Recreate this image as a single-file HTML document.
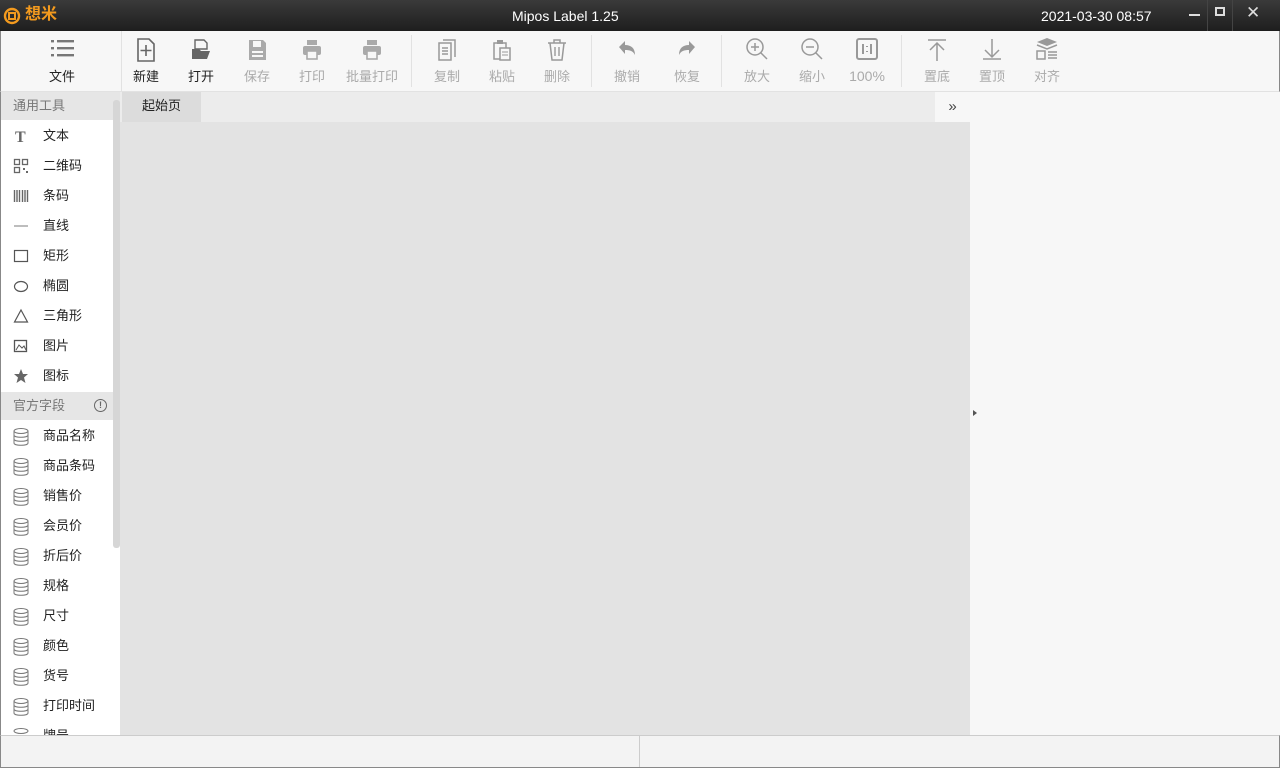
<!DOCTYPE html><html><head><meta charset="utf-8"><style>
*{margin:0;padding:0;box-sizing:border-box}
body{width:1280px;height:768px;overflow:hidden;background:#f7f7f7;font-family:"Liberation Sans","Noto Sans CJK SC",sans-serif;position:relative}
.a{position:absolute}
#title{left:0;top:0;width:1280px;height:31px;background:linear-gradient(#3a3a3a,#1e1e1e);color:#fff}
#tb{left:0;top:31px;width:1280px;height:61px;background:#f7f7f7;border-bottom:1px solid #e2e2e2;border-left:1px solid #888;border-right:1px solid #888}
.it{position:absolute;top:0;width:60px;margin-left:-30px;text-align:center}
.it svg{position:absolute;left:18px;top:6px}
.it span{position:absolute;top:35px;left:0;width:60px;font-size:13px;color:#aaa;white-space:nowrap}
.it.d span{color:#222}
.sep{position:absolute;top:4px;width:1px;height:52px;background:#e2e2e2}
#side{left:0;top:92px;width:120px;height:643px;background:#fff;border-left:1px solid #888}
.hd{position:absolute;left:0;width:119px;height:28px;background:#e6e6e6;font-size:13px;color:#777;padding:6px 12px;line-height:16px}
.row{position:absolute;left:0;width:112px;height:30px;font-size:13px;color:#222;line-height:30px}
.row span{position:absolute;left:42px}
.row svg{position:absolute;left:12px;top:7px}
</style></head><body>
<div id="title" class="a">
 <svg class="a" style="left:3px;top:7px" width="18" height="18" viewBox="0 0 18 18"><circle cx="9" cy="9" r="7" fill="none" stroke="#f39a1e" stroke-width="2.4"/><rect x="6" y="6" width="6" height="6" fill="none" stroke="#f39a1e" stroke-width="2"/></svg>
 <div class="a" style="left:25px;top:5px;font-size:16px;font-weight:bold;color:#f39a1e;line-height:20px">想米</div>
 <div class="a" style="left:512px;top:8px;font-size:14px;line-height:17px">Mipos Label 1.25</div>
 <div class="a" style="left:1041px;top:8px;font-size:14px;line-height:17px">2021-03-30 08:57</div>
 <div class="a" style="left:1189px;top:14px;width:11px;height:2px;background:#ddd"></div>
 <div class="a" style="left:1215px;top:7px;width:10px;height:9px;border:2px solid #ddd"></div>
 <div class="a" style="left:1246px;top:3px;font-size:17px;color:#ddd">✕</div>
 <div class="a" style="left:1207px;top:0;width:1px;height:31px;background:#444"></div>
 <div class="a" style="left:1232px;top:0;width:1px;height:31px;background:#444"></div>
</div>
<div id="tb" class="a">
 <div class="it d" style="left:61px"><svg width="26" height="24"><g fill="#777"><rect x="1" y="3" width="3" height="2.4"/><rect x="7" y="3" width="17" height="2.4"/><rect x="1" y="10" width="3" height="2.4"/><rect x="7" y="10" width="17" height="2.4"/><rect x="1" y="17" width="3" height="2.4"/><rect x="7" y="17" width="17" height="2.4"/></g></svg><span>文件</span></div>
 <div style="position:absolute;left:120px;top:0;width:1px;height:60px;background:#e2e2e2"></div>
 <div class="it d" style="left:145px"><svg width="24" height="26"><path d="M4 2h11l5 5v17H4z" fill="none" stroke="#666" stroke-width="1.6"/><path d="M12 8v11M6.5 13.5h11" stroke="#666" stroke-width="1.6"/></svg><span>新建</span></div>
 <div class="it d" style="left:200px"><svg width="24" height="26"><path d="M6 3h9l3 3v6H6z" fill="none" stroke="#666" stroke-width="1.4"/><path d="M3 12h7l2 2h9l-3 8H3z" fill="#666"/></svg><span>打开</span></div>
 <div class="it" style="left:256px"><svg width="24" height="26"><path d="M4 3h14l3 3v17H4z" fill="#aaa"/><rect x="8" y="4" width="8" height="6" fill="#f7f7f7"/><rect x="7" y="14" width="11" height="2" fill="#f7f7f7"/><rect x="7" y="18" width="11" height="2" fill="#f7f7f7"/></svg><span>保存</span></div>
 <div class="it" style="left:311px"><svg width="24" height="26"><rect x="7" y="3" width="10" height="5" fill="#aaa"/><rect x="3" y="9" width="18" height="9" rx="2" fill="#aaa"/><rect x="7" y="14" width="10" height="8" fill="#f7f7f7" stroke="#aaa" stroke-width="1.6"/></svg><span>打印</span></div>
 <div class="it" style="left:371px"><svg width="24" height="26"><rect x="7" y="3" width="10" height="5" fill="#aaa"/><rect x="3" y="9" width="18" height="9" rx="2" fill="#aaa"/><rect x="7" y="14" width="10" height="8" fill="#f7f7f7" stroke="#aaa" stroke-width="1.6"/></svg><span>批量打印</span></div>
 <div class="sep" style="left:410px"></div>
 <div class="it" style="left:446px"><svg width="24" height="26"><path d="M8 3h12v17" fill="none" stroke="#999" stroke-width="1.5"/><rect x="4" y="6" width="12" height="17" fill="none" stroke="#999" stroke-width="1.5"/><path d="M7 11h6M7 14h6M7 17h6" stroke="#999" stroke-width="1.4"/></svg><span>复制</span></div>
 <div class="it" style="left:501px"><svg width="24" height="26"><path d="M4 6h12v16H4z" fill="none" stroke="#999" stroke-width="1.5"/><rect x="7" y="3" width="6" height="4" fill="#999"/><rect x="10" y="11" width="10" height="12" fill="#f7f7f7" stroke="#999" stroke-width="1.5"/><path d="M12 15h6M12 18h6" stroke="#999"/></svg><span>粘贴</span></div>
 <div class="it" style="left:556px"><svg width="24" height="26"><path d="M3 6h18M9 6V3h6v3M5 6l2 17h10l2-17" fill="none" stroke="#999" stroke-width="1.5"/><path d="M10 10v9M14 10v9" stroke="#999" stroke-width="1.4"/></svg><span>删除</span></div>
 <div class="sep" style="left:590px"></div>
 <div class="it" style="left:626px"><svg width="24" height="26"><path d="M4 10l6-6v4c6 0 10 3 10 10-2-4-5-5-10-5v4z" fill="#999"/></svg><span>撤销</span></div>
 <div class="it" style="left:686px"><svg width="24" height="26"><path d="M20 10l-6-6v4C8 8 4 11 4 18c2-4 5-5 10-5v4z" fill="#999"/></svg><span>恢复</span></div>
 <div class="sep" style="left:720px"></div>
 <div class="it" style="left:756px"><svg width="24" height="26"><circle cx="10" cy="10" r="8" fill="none" stroke="#999" stroke-width="1.5"/><path d="M16 16l6 6M6 10h8M10 6v8" stroke="#999" stroke-width="1.5"/></svg><span>放大</span></div>
 <div class="it" style="left:811px"><svg width="24" height="26"><circle cx="10" cy="10" r="8" fill="none" stroke="#999" stroke-width="1.5"/><path d="M16 16l6 6M6 10h8" stroke="#999" stroke-width="1.5"/></svg><span>缩小</span></div>
 <div class="it" style="left:866px"><svg width="24" height="26"><rect x="2" y="2" width="20" height="20" rx="2" fill="none" stroke="#999" stroke-width="2"/><path d="M8 7v10M16 7v10M12 9v1M12 14v1" stroke="#999" stroke-width="2"/></svg><span style="top:37px;font-size:14px">100%</span></div>
 <div class="sep" style="left:900px"></div>
 <div class="it" style="left:936px"><svg width="24" height="26"><path d="M3 3h18M12 6v18M5 13l7-7 7 7" fill="none" stroke="#999" stroke-width="1.5"/></svg><span>置底</span></div>
 <div class="it" style="left:991px"><svg width="24" height="26"><path d="M3 22h18M12 2v18M5 13l7 7 7-7" fill="none" stroke="#999" stroke-width="1.5"/></svg><span>置顶</span></div>
 <div class="it" style="left:1046px"><svg width="24" height="26"><path d="M12 1l10 4-10 4-10-4z" fill="#999"/><path d="M2 8l10 4 10-4" fill="none" stroke="#999" stroke-width="1.5"/><rect x="2" y="14" width="8" height="8" fill="none" stroke="#999" stroke-width="1.5"/><path d="M13 15h9M13 18h9M13 21h9" stroke="#999" stroke-width="1.5"/></svg><span>对齐</span></div>
</div>
<div id="side" class="a">
 <div class="hd" style="top:0">通用工具</div>
 <div class="row" style="top:29px"><svg width="16" height="16"><text x="2" y="14" font-family="Liberation Serif" font-size="16" font-weight="bold" fill="#666">T</text></svg><span>文本</span></div>
 <div class="row" style="top:59px"><svg width="16" height="16"><g fill="none" stroke="#666" stroke-width="1.3"><rect x="1.5" y="1.5" width="5" height="5"/><rect x="9.5" y="1.5" width="5" height="5"/><rect x="1.5" y="9.5" width="5" height="5"/></g><rect x="10" y="10" width="2" height="2" fill="#666"/><rect x="13" y="13" width="2" height="2" fill="#666"/></svg><span>二维码</span></div>
 <div class="row" style="top:89px"><svg width="16" height="16"><path d="M1.5 2v12M4 2v12M6.5 2v12M9.5 2v12M12 2v12M14.5 2v12" stroke="#666" stroke-width="1.4"/></svg><span>条码</span></div>
 <div class="row" style="top:119px"><svg width="16" height="16"><path d="M1 8h14" stroke="#999" stroke-width="1.3"/></svg><span>直线</span></div>
 <div class="row" style="top:149px"><svg width="16" height="16"><rect x="1.5" y="2.5" width="13" height="11" fill="none" stroke="#555" stroke-width="1.2"/></svg><span>矩形</span></div>
 <div class="row" style="top:179px"><svg width="16" height="16"><ellipse cx="8" cy="8.5" rx="6.5" ry="5" fill="none" stroke="#555" stroke-width="1.2"/></svg><span>椭圆</span></div>
 <div class="row" style="top:209px"><svg width="16" height="16"><path d="M8 2l6.5 12h-13z" fill="none" stroke="#555" stroke-width="1.2"/></svg><span>三角形</span></div>
 <div class="row" style="top:239px"><svg width="16" height="16"><rect x="1.5" y="2.5" width="12" height="11" fill="none" stroke="#555" stroke-width="1.3"/><path d="M3 12l3-5 3 3 2-2 2 4" fill="none" stroke="#555"/></svg><span>图片</span></div>
 <div class="row" style="top:269px"><svg width="16" height="16"><path d="M8 1l2 5h5l-4 3.5 1.5 5.5L8 12l-4.5 3L5 9.5 1 6h5z" fill="#666"/></svg><span>图标</span></div>
 <div class="hd" style="top:300px">官方字段<span style="position:absolute;left:93px;top:7px;width:13px;height:13px;border:1.3px solid #666;border-radius:50%;font-size:9px;line-height:10px;text-align:center;color:#666;font-weight:bold">!</span></div>
 <div class="row" style="top:329px"><svg width="16" height="18"><g fill="none" stroke="#777"><ellipse cx="8" cy="3" rx="7" ry="2.5"/><path d="M1 3v12c0 3 14 3 14 0V3M1 7c0 3 14 3 14 0M1 11c0 3 14 3 14 0"/></g></svg><span>商品名称</span></div>
 <div class="row" style="top:359px"><svg width="16" height="18"><g fill="none" stroke="#777"><ellipse cx="8" cy="3" rx="7" ry="2.5"/><path d="M1 3v12c0 3 14 3 14 0V3M1 7c0 3 14 3 14 0M1 11c0 3 14 3 14 0"/></g></svg><span>商品条码</span></div>
 <div class="row" style="top:389px"><svg width="16" height="18"><g fill="none" stroke="#777"><ellipse cx="8" cy="3" rx="7" ry="2.5"/><path d="M1 3v12c0 3 14 3 14 0V3M1 7c0 3 14 3 14 0M1 11c0 3 14 3 14 0"/></g></svg><span>销售价</span></div>
 <div class="row" style="top:419px"><svg width="16" height="18"><g fill="none" stroke="#777"><ellipse cx="8" cy="3" rx="7" ry="2.5"/><path d="M1 3v12c0 3 14 3 14 0V3M1 7c0 3 14 3 14 0M1 11c0 3 14 3 14 0"/></g></svg><span>会员价</span></div>
 <div class="row" style="top:449px"><svg width="16" height="18"><g fill="none" stroke="#777"><ellipse cx="8" cy="3" rx="7" ry="2.5"/><path d="M1 3v12c0 3 14 3 14 0V3M1 7c0 3 14 3 14 0M1 11c0 3 14 3 14 0"/></g></svg><span>折后价</span></div>
 <div class="row" style="top:479px"><svg width="16" height="18"><g fill="none" stroke="#777"><ellipse cx="8" cy="3" rx="7" ry="2.5"/><path d="M1 3v12c0 3 14 3 14 0V3M1 7c0 3 14 3 14 0M1 11c0 3 14 3 14 0"/></g></svg><span>规格</span></div>
 <div class="row" style="top:509px"><svg width="16" height="18"><g fill="none" stroke="#777"><ellipse cx="8" cy="3" rx="7" ry="2.5"/><path d="M1 3v12c0 3 14 3 14 0V3M1 7c0 3 14 3 14 0M1 11c0 3 14 3 14 0"/></g></svg><span>尺寸</span></div>
 <div class="row" style="top:539px"><svg width="16" height="18"><g fill="none" stroke="#777"><ellipse cx="8" cy="3" rx="7" ry="2.5"/><path d="M1 3v12c0 3 14 3 14 0V3M1 7c0 3 14 3 14 0M1 11c0 3 14 3 14 0"/></g></svg><span>颜色</span></div>
 <div class="row" style="top:569px"><svg width="16" height="18"><g fill="none" stroke="#777"><ellipse cx="8" cy="3" rx="7" ry="2.5"/><path d="M1 3v12c0 3 14 3 14 0V3M1 7c0 3 14 3 14 0M1 11c0 3 14 3 14 0"/></g></svg><span>货号</span></div>
 <div class="row" style="top:599px"><svg width="16" height="18"><g fill="none" stroke="#777"><ellipse cx="8" cy="3" rx="7" ry="2.5"/><path d="M1 3v12c0 3 14 3 14 0V3M1 7c0 3 14 3 14 0M1 11c0 3 14 3 14 0"/></g></svg><span>打印时间</span></div>
 <div class="row" style="top:629px;height:14px;overflow:hidden"><svg width="16" height="18"><g fill="none" stroke="#777"><ellipse cx="8" cy="3" rx="7" ry="2.5"/></g></svg><span>牌号</span></div>
 <div class="a" style="left:112px;top:8px;width:7px;height:448px;background:#d6d6d6;border-radius:3px"></div>
</div>
<div class="a" style="left:120px;top:92px;width:850px;height:30px;background:#ececec"></div>
<div class="a" style="left:122px;top:92px;width:79px;height:30px;background:#dcdcdc;font-size:13px;color:#222;line-height:28px;text-align:center">起始页</div>
<div class="a" style="left:935px;top:92px;width:35px;height:30px;background:#f7f7f7;font-size:15px;color:#444;text-align:center;line-height:30px">»</div>
<div class="a" style="left:120px;top:122px;width:850px;height:613px;background:#e3e3e3"></div>
<div class="a" style="left:973px;top:410px;width:0;height:0;border-left:4px solid #555;border-top:3px solid transparent;border-bottom:3px solid transparent"></div>
<div class="a" style="left:0;top:735px;width:1280px;height:33px;background:#f3f3f3;border-top:1px solid #ccc;border-left:1px solid #888;border-right:1px solid #888;border-bottom:1px solid #888"></div>
<div class="a" style="left:639px;top:736px;width:1px;height:31px;background:#ccc"></div>
</body></html>
